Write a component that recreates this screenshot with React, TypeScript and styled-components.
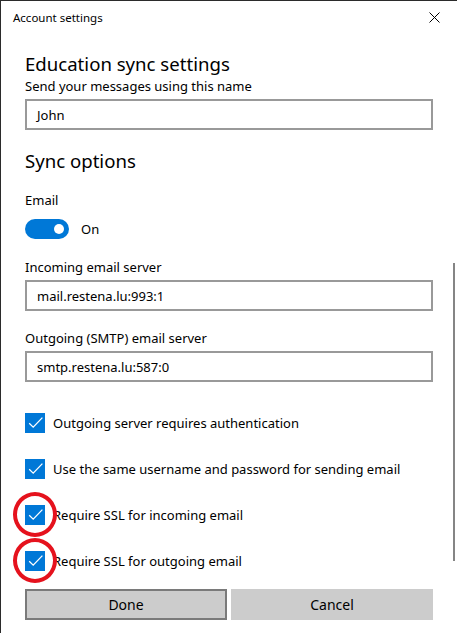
import React from "react";
import styled, { createGlobalStyle } from "styled-components";

const GlobalStyle = createGlobalStyle`
  html, body {
    margin: 0;
    padding: 0;
    background: #ffffff;
  }
  * {
    box-sizing: border-box;
  }
`;

const Window = styled.div`
  position: relative;
  width: 457px;
  height: 633px;
  overflow: hidden;
  background: #ffffff;
  border-top: 1px solid #2b2b2b;
  border-left: 1px solid #2b2b2b;
  font-family: "Noto Sans", "Open Sans", sans-serif;
  color: #000000;
`;

const TitleBar = styled.div`
  height: 33px;
  display: flex;
  align-items: center;
  justify-content: space-between;
  padding: 0 17px 0 12px;
`;

const Title = styled.span`
  font-size: 11.5px;
  line-height: 16px;
`;

const CloseButton = styled.button`
  width: 12px;
  height: 12px;
  padding: 0;
  border: none;
  background: none;
  display: flex;
  align-items: center;
  justify-content: center;
`;

const Content = styled.div`
  padding: 17px 24px 0 24px;
  display: flex;
  flex-direction: column;
`;

const Heading = styled.h2<{ $gap?: number }>`
  margin: ${(p) => p.$gap ?? 0}px 0 0;
  font-size: 18.6px;
  font-weight: 400;
  line-height: 26px;
`;

const Label = styled.div<{ $gap?: number }>`
  margin-top: ${(p) => p.$gap ?? 0}px;
  font-size: 13px;
  line-height: 18px;
`;

const TextField = styled.div`
  margin-top: 4px;
  height: 31px;
  border: 2px solid #999999;
  padding: 0 10px;
  display: flex;
  align-items: center;
  font-size: 13px;
`;

const ToggleRow = styled.div`
  margin-top: 10px;
  display: flex;
  align-items: center;
  gap: 12px;
  font-size: 13px;
`;

const Toggle = styled.div<{ $on: boolean }>`
  width: 44px;
  height: 20px;
  border-radius: 10px;
  background: ${(p) => (p.$on ? "#0078d7" : "#ffffff")};
  display: flex;
  align-items: center;
  justify-content: ${(p) => (p.$on ? "flex-end" : "flex-start")};
  padding: 0 5px;
`;

const Knob = styled.span`
  width: 10px;
  height: 10px;
  border-radius: 50%;
  background: #ffffff;
`;

const CheckList = styled.div`
  margin-top: 31px;
  display: flex;
  flex-direction: column;
  gap: 26px;
`;

const CheckRow = styled.label`
  position: relative;
  display: flex;
  align-items: center;
  gap: 8px;
  height: 20px;
  font-size: 13px;
`;

const Box = styled.span`
  width: 20px;
  height: 20px;
  background: #0078d7;
  display: flex;
  flex-shrink: 0;
`;

// red ring drawn around a checkbox to call it out
const Marker = styled.span`
  position: absolute;
  left: -12px;
  top: -13px;
  width: 44px;
  height: 45px;
  border: 4px solid #e5121d;
  border-radius: 50%;
  pointer-events: none;
`;

const Buttons = styled.div`
  margin-top: 18px;
  display: grid;
  grid-template-columns: 1fr 1fr;
  gap: 4px;
`;

const Button = styled.button<{ $primary?: boolean }>`
  height: 31px;
  background: #cccccc;
  border: 2px solid ${(p) => (p.$primary ? "#7a7a7a" : "#cccccc")};
  font-family: inherit;
  font-size: 14px;
  color: #000000;
`;

const ScrollThumb = styled.div`
  position: absolute;
  right: 2px;
  top: 262px;
  width: 2px;
  height: 298px;
  background: #858585;
`;

const CheckIcon = () => (
  <svg width="20" height="20" viewBox="0 0 20 20">
    <path d="M4.2 10.3 L8.2 14.2 L17.4 4.6" fill="none" stroke="#ffffff" strokeWidth="1.3" />
  </svg>
);

type Option = { label: string; marked?: boolean };

const options: Option[] = [
  { label: "Outgoing server requires authentication" },
  { label: "Use the same username and password for sending email" },
  { label: "Require SSL for incoming email", marked: true },
  { label: "Require SSL for outgoing email", marked: true },
];

export default function App() {
  return (
    <>
      <GlobalStyle />
      <Window>
        <TitleBar>
          <Title>Account settings</Title>
          <CloseButton aria-label="Close">
            <svg width="11" height="11" viewBox="0 0 11 11">
              <path d="M0.5 0.5 L10.5 10.5 M10.5 0.5 L0.5 10.5" stroke="#000" strokeWidth="1" />
            </svg>
          </CloseButton>
        </TitleBar>
        <Content>
          <Heading>Education sync settings</Heading>
          <Label>Send your messages using this name</Label>
          <TextField>John</TextField>

          <Heading $gap={18}>Sync options</Heading>
          <Label $gap={17}>Email</Label>
          <ToggleRow>
            <Toggle $on>
              <Knob />
            </Toggle>
            On
          </ToggleRow>

          <Label $gap={19}>Incoming email server</Label>
          <TextField>mail.restena.lu:993:1</TextField>

          <Label $gap={18}>Outgoing (SMTP) email server</Label>
          <TextField>smtp.restena.lu:587:0</TextField>

          <CheckList>
            {options.map((o) => (
              <CheckRow key={o.label}>
                <Box>
                  <CheckIcon />
                </Box>
                {o.label}
                {o.marked && <Marker />}
              </CheckRow>
            ))}
          </CheckList>

          <Buttons>
            <Button $primary>Done</Button>
            <Button>Cancel</Button>
          </Buttons>
        </Content>
        <ScrollThumb />
      </Window>
    </>
  );
}
